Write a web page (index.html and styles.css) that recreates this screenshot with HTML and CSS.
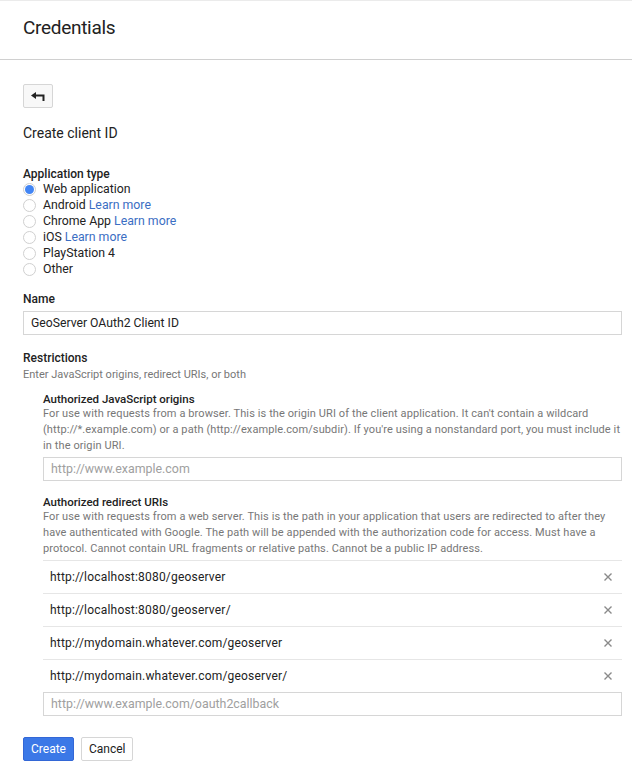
FILE: index.html
```html
<!DOCTYPE html>
<html>
<head>
<meta charset="utf-8">
<title>Credentials</title>
<link rel="stylesheet" href="styles.css">
</head>
<body>
<header class="header">
  <h1 class="title">Credentials</h1>
</header>
<main class="main">
  <button class="back-btn" type="button" aria-label="Back">
    <svg width="14" height="9" viewBox="0 0 14 9"><polygon points="0,3.5 5,0 5,7" fill="#222"/><path d="M4 3.5 H12.5 V9" fill="none" stroke="#222" stroke-width="2"/></svg>
  </button>
  <h2 class="subtitle">Create client ID</h2>

  <div class="field">
    <div class="label">Application type</div>
    <div class="radios">
      <label class="radio-row"><span class="radio checked"></span>Web application</label>
      <label class="radio-row"><span class="radio"></span>Android <a class="link">Learn more</a></label>
      <label class="radio-row"><span class="radio"></span>Chrome App <a class="link">Learn more</a></label>
      <label class="radio-row"><span class="radio"></span>iOS <a class="link">Learn more</a></label>
      <label class="radio-row"><span class="radio"></span>PlayStation 4</label>
      <label class="radio-row"><span class="radio"></span>Other</label>
    </div>
  </div>

  <div class="field name-field">
    <div class="label">Name</div>
    <div class="input name-input">GeoServer OAuth2 Client ID</div>
  </div>

  <div class="field restrictions">
    <div class="label">Restrictions</div>
    <div class="hint">Enter JavaScript origins, redirect URIs, or both</div>

    <div class="sub">
      <div class="sub-label">Authorized JavaScript origins</div>
      <p class="desc">For use with requests from a browser. This is the origin URI of the client application. It can't contain a wildcard (http://*.example.com) or a path (http://example.com/subdir). If you're using a nonstandard port, you must include it in the origin URI.</p>
      <div class="input placeholder">http://www.example.com</div>
    </div>

    <div class="sub">
      <div class="sub-label">Authorized redirect URIs</div>
      <p class="desc">For use with requests from a web server. This is the path in your application that users are redirected to after they have authenticated with Google. The path will be appended with the authorization code for access. Must have a protocol. Cannot contain URL fragments or relative paths. Cannot be a public IP address.</p>
      <ul class="uri-list">
        <li class="uri-row"><span>http://localhost:8080/geoserver</span><svg class="remove" width="8" height="8" viewBox="0 0 8 8"><path d="M0.5 0.5 L7.5 7.5 M7.5 0.5 L0.5 7.5" stroke="#8a8a8a" stroke-width="1.4"/></svg></li>
        <li class="uri-row"><span>http://localhost:8080/geoserver/</span><svg class="remove" width="8" height="8" viewBox="0 0 8 8"><path d="M0.5 0.5 L7.5 7.5 M7.5 0.5 L0.5 7.5" stroke="#8a8a8a" stroke-width="1.4"/></svg></li>
        <li class="uri-row"><span>http://mydomain.whatever.com/geoserver</span><svg class="remove" width="8" height="8" viewBox="0 0 8 8"><path d="M0.5 0.5 L7.5 7.5 M7.5 0.5 L0.5 7.5" stroke="#8a8a8a" stroke-width="1.4"/></svg></li>
        <li class="uri-row"><span>http://mydomain.whatever.com/geoserver/</span><svg class="remove" width="8" height="8" viewBox="0 0 8 8"><path d="M0.5 0.5 L7.5 7.5 M7.5 0.5 L0.5 7.5" stroke="#8a8a8a" stroke-width="1.4"/></svg></li>
      </ul>
      <div class="input placeholder">http://www.example.com/oauth2callback</div>
    </div>
  </div>

  <div class="actions">
    <button class="btn primary" type="button">Create</button>
    <button class="btn" type="button">Cancel</button>
  </div>
</main>
</body>
</html>
```
FILE: styles.css
```css
html, body {
  margin: 0;
  padding: 0;
  background: #fff;
}
body {
  font-family: Roboto, "Liberation Sans", Arial, sans-serif;
  color: #222;
  border-top: 1px solid #ebebeb;
}
.header {
  height: 58px;
  border-bottom: 1px solid #d0d0d0;
  padding-left: 23px;
  display: flex;
  align-items: center;
}
.title {
  margin: 0;
  font-size: 19px;
  letter-spacing: -0.3px;
  font-weight: 400;
  margin-top: -5px;
}
.main {
  padding: 24px 10px 0 23px;
}
.back-btn {
  width: 30px;
  height: 24px;
  border: 1px solid #d6d6d6;
  border-radius: 2px;
  background: #f8f8f8;
  display: flex;
  align-items: center;
  justify-content: center;
  padding: 0;
  margin: 0;
}
.subtitle {
  margin: 16px 0 0;
  font-size: 14px;
  font-weight: 400;
  line-height: 18px;
}
.field {
  margin-top: 26px;
}
.label {
  font-size: 12px;
  font-weight: 500;
  line-height: 13px;
}
.radios {
  display: flex;
  flex-direction: column;
}
.radio-row {
  display: flex;
  align-items: center;
  height: 16px;
  font-size: 12.3px;
}
.radio {
  width: 11px;
  height: 11px;
  border: 1px solid #d0d0d0;
  border-radius: 50%;
  margin-right: 7px;
  position: relative;
  box-sizing: content-box;
}
.radio.checked::after {
  content: "";
  position: absolute;
  left: 1px;
  top: 1px;
  width: 9px;
  height: 9px;
  border-radius: 50%;
  background: #4285f4;
}
.link {
  color: #3b6ec3;
  margin-left: 3px;
  cursor: pointer;
}
.name-field {
  margin-top: 16px;
}
.name-field .label {
  margin-bottom: 5px;
}
.input {
  height: 22px;
  border: 1px solid #d6d6d6;
  font-size: 12.4px;
  line-height: 22px;
  padding-left: 7px;
  color: #222;
}
.name-input {
  font-size: 12.2px;
}
.input.placeholder {
  color: #a0a0a0;
}
.restrictions {
  margin-top: 17px;
}
.hint {
  font-size: 11px;
  color: #777;
  line-height: 16px;
  margin-top: 2px;
}
.sub {
  margin-left: 20px;
  margin-top: 9px;
}
.sub + .sub {
  margin-top: 14px;
}
.sub-label {
  font-size: 11.5px;
  font-weight: 500;
  line-height: 14px;
}
.desc {
  margin: 0 0 3px;
  font-size: 11px;
  letter-spacing: 0.1px;
  color: #777;
  line-height: 16px;
}
.uri-list {
  list-style: none;
  margin: 0;
  padding: 0;
}
.uri-row {
  display: flex;
  justify-content: space-between;
  align-items: center;
  height: 32px;
  border-top: 1px solid #e6e6e6;
  padding: 0 10px 0 7px;
  font-size: 12px;
  letter-spacing: 0.2px;
}
.actions {
  display: flex;
  gap: 7px;
  margin-top: 21px;
}
.btn {
  height: 24px;
  padding: 0 7px;
  border: 1px solid #d6d6d6;
  border-radius: 2px;
  background: #fff;
  font-family: inherit;
  font-size: 12px;
  color: #222;
}
.btn.primary {
  background: #3b78e7;
  border-color: #3367d6;
  color: #fff;
}
```
